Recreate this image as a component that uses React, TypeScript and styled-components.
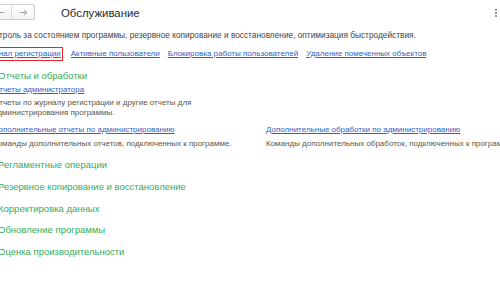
import React from 'react';
import styled, { createGlobalStyle } from 'styled-components';

const Global = createGlobalStyle`
  html, body { margin: 0; padding: 0; background: #fff; }
  body { font-family: "Liberation Sans", Arial, sans-serif; }
  #root { width: 500px; height: 300px; overflow: hidden; }
`;

const Page = styled.div`
  width: 500px;
  height: 300px;
  overflow: hidden;
  background: #fff;
`;

const Header = styled.div`
  display: flex;
  align-items: center;
  height: 16px;
  padding-top: 4px;
  margin-left: -12px;
`;

const NavGroup = styled.div`
  display: flex;
  height: 16px;
  box-sizing: border-box;
  border: 1px solid #cfcfcf;
  border-radius: 2px;
  background: linear-gradient(#ffffff, #f3f3f3);
`;

const NavButton = styled.div<{ $first?: boolean }>`
  width: 22px;
  display: flex;
  align-items: center;
  justify-content: center;
  border-left: ${p => (p.$first ? 'none' : '1px solid #dadada')};
`;

const Title = styled.div`
  margin-left: 26px;
  font-size: 11.4px;
  line-height: 16px;
  color: #2a2a2a;
  padding-top: 2px;
`;

const MoreDots = styled.div`
  margin-left: auto;
  margin-right: 3px;
  display: flex;
  flex-direction: column;
  gap: 1px;
  padding-top: 2px;
  & > span {
    width: 2px;
    height: 2px;
    background: #9a9a9a;
  }
`;

const Lead = styled.div`
  margin: 9px 0 0 -15px;
  font-size: 8.3px;
  line-height: 12px;
  color: #454545;
  white-space: nowrap;
`;

const LinkBar = styled.div`
  display: flex;
  align-items: center;
  margin: 6px 0 0 -19px;
  height: 14px;
  gap: 8px;
  white-space: nowrap;
`;

const Link = styled.a<{ $active?: boolean }>`
  font-size: 8px;
  line-height: 12px;
  color: #3462c2;
  text-decoration: underline;
  text-underline-offset: 1px;
  cursor: pointer;
  box-sizing: border-box;
  ${p =>
    p.$active
      ? `border: 1.5px solid #e8262a; padding: 0 1px; height: 14px; line-height: 11px;`
      : ''}
`;

const Sections = styled.div`
  margin-left: -2px;
`;

const GroupTitle = styled.div<{ $gap: number }>`
  margin-top: ${p => p.$gap}px;
  font-size: 9.5px;
  line-height: 14px;
  color: #37ab59;
  white-space: nowrap;
`;

const SubGrid = styled.div`
  display: grid;
  grid-template-columns: 273px 1fr;
  margin-left: -5px;
`;

const SubItem = styled.div<{ $top: number }>`
  display: flex;
  flex-direction: column;
  align-items: flex-start;
  margin-top: ${p => p.$top}px;
  white-space: nowrap;
`;

const SubLink = styled(Link)`
  line-height: 12px;
`;

const Note = styled.div<{ $gap: number; $width?: number }>`
  margin-top: ${p => p.$gap}px;
  font-size: 8px;
  line-height: 10px;
  color: #5c5648;
  white-space: ${p => (p.$width ? 'normal' : 'nowrap')};
  width: ${p => (p.$width ? `${p.$width}px` : 'auto')};
`;

const Arrow = ({ dir }: { dir: 'left' | 'right' }) => (
  <svg width="9" height="7" viewBox="0 0 9 7">
    {dir === 'right' ? (
      <path d="M0.5 3.5H7.5M5 1L7.8 3.5L5 6" stroke="#a0a0a0" strokeWidth="1" fill="none" />
    ) : (
      <path d="M8.5 3.5H1.5M4 1L1.2 3.5L4 6" stroke="#a0a0a0" strokeWidth="1" fill="none" />
    )}
  </svg>
);

const groups = [
  'Регламентные операции',
  'Резервное копирование и восстановление',
  'Корректировка данных',
  'Обновление программы',
  'Оценка производительности',
];

export default function App() {
  return (
    <Page>
      <Global />
      <Header>
        <NavGroup>
          <NavButton $first>
            <Arrow dir="left" />
          </NavButton>
          <NavButton>
            <Arrow dir="right" />
          </NavButton>
        </NavGroup>
        <Title>Обслуживание</Title>
        <MoreDots>
          <span />
          <span />
          <span />
        </MoreDots>
      </Header>
      <Lead>
        Контроль за состоянием программы, резервное копирование и восстановление, оптимизация быстродействия.
      </Lead>
      <LinkBar>
        <Link $active>Журнал регистрации</Link>
        <Link>Активные пользователи</Link>
        <Link>Блокировка работы пользователей</Link>
        <Link>Удаление помеченных объектов</Link>
      </LinkBar>
      <Sections>
        <GroupTitle $gap={8}>Отчеты и обработки</GroupTitle>
        <SubGrid>
          <SubItem $top={1}>
            <SubLink>Отчеты администратора</SubLink>
            <Note $gap={2} $width={200}>
              Отчеты по журналу регистрации и другие отчеты для администрирования программы.
            </Note>
          </SubItem>
          <div />
          <SubItem $top={6}>
            <SubLink>Дополнительные отчеты по администрированию</SubLink>
            <Note $gap={3}>Команды дополнительных отчетов, подключенных к программе.</Note>
          </SubItem>
          <SubItem $top={6}>
            <SubLink>Дополнительные обработки по администрированию</SubLink>
            <Note $gap={3}>Команды дополнительных обработок, подключенных к программе.</Note>
          </SubItem>
        </SubGrid>
        {groups.map((g, i) => (
          <GroupTitle key={g} $gap={i === 0 ? 9 : 7.75}>
            {g}
          </GroupTitle>
        ))}
      </Sections>
    </Page>
  );
}
